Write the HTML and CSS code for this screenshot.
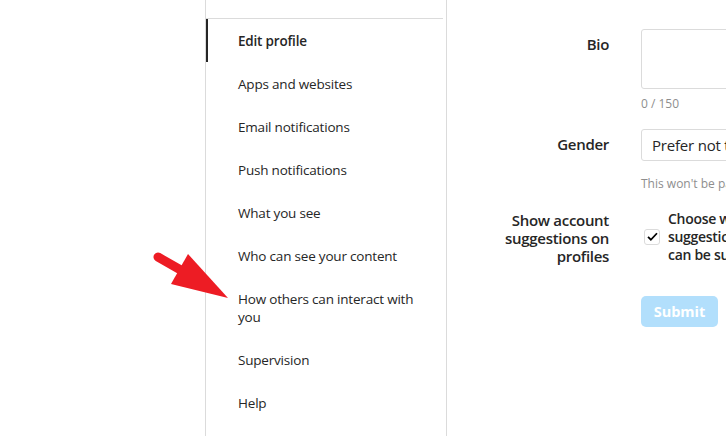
FILE: index.html
```html
<!DOCTYPE html>
<html lang="en">
<head>
<meta charset="utf-8">
<title>Edit profile</title>
<link rel="stylesheet" href="styles.css">
</head>
<body>
<div class="page">
  <nav class="nav">
    <div class="nav-top"></div>
    <a class="nav-item active">Edit profile</a>
    <a class="nav-item">Apps and websites</a>
    <a class="nav-item">Email notifications</a>
    <a class="nav-item">Push notifications</a>
    <a class="nav-item">What you see</a>
    <a class="nav-item">Who can see your content</a>
    <a class="nav-item">How others can interact with you</a>
    <a class="nav-item">Supervision</a>
    <a class="nav-item">Help</a>
  </nav>
  <main class="main">
    <div class="row">
      <aside class="label">Bio</aside>
      <div class="field">
        <div class="textarea"></div>
        <div class="counter">0 / 150</div>
      </div>
    </div>
    <div class="row row-gender">
      <aside class="label">Gender</aside>
      <div class="field">
        <div class="select">Prefer not to say</div>
        <div class="hint">This won't be part of your public profile.</div>
      </div>
    </div>
    <div class="row row-suggest">
      <aside class="label">Show account suggestions on profiles</aside>
      <div class="field check-field">
        <span class="checkbox">
          <svg viewBox="0 0 16 16" width="13" height="13"><path d="M2.5 8.5l3.5 3.5 7.5-8" fill="none" stroke="#000" stroke-width="2.2"/></svg>
        </span>
        <span class="check-text">
          <span class="line">Choose whether people can see similar account</span>
          <span class="line">suggestions on your profile, and whether your account</span>
          <span class="line">can be suggested on other profiles.</span>
        </span>
      </div>
    </div>
    <div class="row row-submit">
      <aside class="label"></aside>
      <div class="field">
        <button class="submit">Submit</button>
      </div>
    </div>
  </main>
</div>
<svg class="arrow" viewBox="145 245 90 60" width="90" height="60">
  <line x1="158" y1="257" x2="186" y2="273" stroke="#ed1c24" stroke-width="9" stroke-linecap="round"/>
  <polygon points="188,254 171,284 228,298" fill="#ed1c24"/>
</svg>
</body>
</html>
```
FILE: styles.css
```css
html, body {
  margin: 0;
  padding: 0;
  background: #fff;
}
body {
  width: 726px;
  height: 436px;
  overflow: hidden;
  position: relative;
  font-family: "Open Sans", "Noto Sans", sans-serif;
  color: #262626;
}
.page {
  display: flex;
  padding-left: 205px;
  height: 436px;
}
.nav {
  flex: 0 0 240px;
  border-left: 1px solid #dbdbdb;
  border-right: 1px solid #dbdbdb;
  display: flex;
  flex-direction: column;
}
.nav-top {
  height: 18px;
  border-bottom: 1px solid #dbdbdb;
  margin-right: 3px;
}
.nav-item {
  display: block;
  padding: 13px 16px 12px 30px;
  border-left: 2px solid transparent;
  font-size: 13.5px;
  line-height: 18px;
  letter-spacing: -0.2px;
  color: #262626;
}
.nav-item.active {
  border-left-color: #262626;
  font-weight: 600;
}
.main {
  flex: 1;
  padding-top: 29px;
  display: flex;
  flex-direction: column;
  min-width: 0;
}
.row {
  display: flex;
}
.label {
  flex: 0 0 130px;
  padding: 0 32px;
  text-align: right;
  font-size: 15px;
  line-height: 18px;
  font-weight: 600;
  letter-spacing: -0.3px;
  margin-top: 6px;
}
.field {
  flex: 0 0 355px;
}
.textarea {
  height: 58px;
  border: 1px solid #dbdbdb;
  border-radius: 3px;
}
.counter {
  margin-top: 7px;
  font-size: 12px;
  line-height: 16px;
  color: #8e8e8e;
}
.row-gender {
  margin-top: 17px;
}
.select {
  height: 30px;
  border: 1px solid #dbdbdb;
  border-radius: 3px;
  padding-left: 10px;
  font-size: 15px;
  line-height: 30px;
  letter-spacing: -0.2px;
  white-space: nowrap;
}
.hint {
  margin-top: 15px;
  font-size: 12px;
  line-height: 16px;
  color: #8e8e8e;
  white-space: nowrap;
}
.row-suggest {
  margin-top: 13px;
}
.check-field {
  display: flex;
  align-items: center;
  padding-top: 3px;
}
.checkbox {
  flex: 0 0 14px;
  width: 14px;
  height: 14px;
  margin-left: 3px;
  margin-right: 8px;
  border: 1px solid #dbdbdb;
  border-radius: 3px;
  display: flex;
  align-items: center;
  justify-content: center;
}
.check-text {
  font-size: 14px;
  line-height: 18px;
  font-weight: 600;
  letter-spacing: -0.3px;
  display: flex;
  flex-direction: column;
}
.line {
  white-space: nowrap;
}
.row-submit {
  margin-top: 31px;
}
.submit {
  width: 77px;
  height: 31px;
  border: 0;
  border-radius: 5px;
  background: #b2dffc;
  color: #fff;
  font-family: inherit;
  font-size: 14.5px;
  font-weight: 700;
  padding: 0;
}
.arrow {
  position: absolute;
  left: 145px;
  top: 245px;
}
```
